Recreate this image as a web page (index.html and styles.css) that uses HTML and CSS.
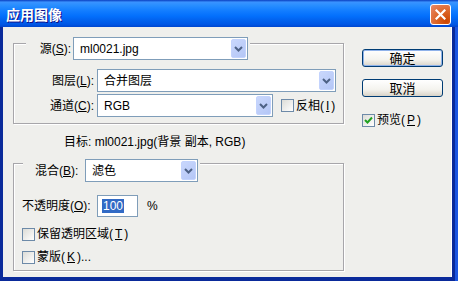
FILE: index.html
```html
<!DOCTYPE html>
<html>
<head>
<meta charset="utf-8">
<link rel="stylesheet" href="styles.css">
</head>
<body>
<div class="window">
  <div class="titlebar">
    <span class="title">应用图像</span>
    <span class="close"><svg width="11" height="11" viewBox="0 0 11 11"><path d="M1.5 1.5 L9.5 9.5 M9.5 1.5 L1.5 9.5" stroke="#fff" stroke-width="2.2" stroke-linecap="square"/></svg></span>
  </div>
  <div class="frame">
    <div class="content">
      <div class="main">
        <div class="group g1">
          <div class="legend l1">
            <span class="lbl lbl-src">源(<u>S</u>):</span>
            <div class="select s-src"><span>ml0021.jpg</span><i class="arrow"><svg width="9" height="6" viewBox="0 0 9 6"><path d="M1 1 L4.5 4.5 L8 1" fill="none" stroke="#4d6185" stroke-width="2"/></svg></i></div>
          </div>
          <div class="row r-layer">
            <span class="lbl lbl-r">图层(<u>L</u>):</span>
            <div class="select s-layer"><span>合并图层</span><i class="arrow"><svg width="9" height="6" viewBox="0 0 9 6"><path d="M1 1 L4.5 4.5 L8 1" fill="none" stroke="#4d6185" stroke-width="2"/></svg></i></div>
          </div>
          <div class="row r-chan">
            <span class="lbl lbl-r">通道(<u>C</u>):</span>
            <div class="select s-chan"><span>RGB</span><i class="arrow"><svg width="9" height="6" viewBox="0 0 9 6"><path d="M1 1 L4.5 4.5 L8 1" fill="none" stroke="#4d6185" stroke-width="2"/></svg></i></div>
            <span class="check c-inv"><span class="box"></span>反相(<u>I</u>)</span>
          </div>
        </div>
        <div class="target">目标: ml0021.jpg(背景 副本, RGB)</div>
        <div class="group g2">
          <div class="legend l2">
            <span class="lbl lbl-blend">混合(<u>B</u>):</span>
            <div class="select s-blend"><span>滤色</span><i class="arrow"><svg width="9" height="6" viewBox="0 0 9 6"><path d="M1 1 L4.5 4.5 L8 1" fill="none" stroke="#4d6185" stroke-width="2"/></svg></i></div>
          </div>
          <div class="row r-op">
            <span class="lbl lbl-op">不透明度(<u>O</u>):</span>
            <div class="input"><span class="sel">100</span></div>
            <span class="pct">%</span>
          </div>
          <span class="check c-keep"><span class="box"></span>保留透明区域(<u>T</u>)</span>
          <span class="check c-mask"><span class="box"></span>蒙版(<u>K</u>)...</span>
        </div>
      </div>
      <div class="side">
        <div class="btn btn-default">确定</div>
        <div class="btn btn-cancel">取消</div>
        <span class="check c-prev"><span class="box"><svg width="11" height="11" viewBox="0 0 11 11"><path d="M2 5 L4.5 7.5 L9 2.5" fill="none" stroke="#21a121" stroke-width="2"/></svg></span>预览(<u>P</u>)</span>
      </div>
    </div>
  </div>
</div>
</body>
</html>
```
FILE: styles.css
```css
* { box-sizing: border-box; }
html, body { margin: 0; padding: 0; }
body {
  width: 458px; height: 281px; overflow: hidden;
  background: #1c56e0;
  font-family: "Liberation Sans", "Noto Sans CJK SC", sans-serif;
  font-size: 12px; line-height: 14px; color: #000;
}
u { text-decoration: underline; text-underline-offset: 1px; }
.window { width: 458px; height: 281px; display: flex; flex-direction: column; }
.titlebar {
  height: 27px; flex: none;
  display: flex; align-items: center; justify-content: space-between;
  padding: 0 7px 0 6px;
  background: linear-gradient(#0a3fc0 0%, #3a93ff 8%, #288eff 20%, #127dff 40%, #036ffc 60%, #0262ee 75%, #0057e5 90%, #0046cf 100%);
}
.title {
  color: #fff; font-weight: bold; font-size: 14px;
  font-family: "Noto Sans CJK SC", sans-serif;
  text-shadow: 1px 1px #0f1089;
}
.close {
  width: 21px; height: 21px; margin-top: 1px;
  border: 1px solid #fff; border-radius: 3px;
  background: radial-gradient(circle at 80% 85%, #cc4600 0%, #dc6527 45%, #e98a6b 100%);
  display: flex; align-items: center; justify-content: center;
}
.frame {
  flex: 1; width: 455px;
  border: solid #0a2a9a; border-width: 0 3px 4px 3px;
  background: #efefec;
  box-shadow: inset -1px 0 #fff;
}
.content { display: flex; gap: 18px; padding: 16px 0 0 10px; }
.main { width: 331px; display: flex; flex-direction: column; }
.group {
  width: 331px;
  border: 1px solid #a7a6aa;
  box-shadow: inset 1px 1px #fff, 1px 1px #fff;
  display: flex; flex-direction: column; align-items: flex-start;
}
.g1 { height: 81px; }
.g2 { height: 108px; margin-top: 14px; }
.legend { display: flex; align-items: center; background: #efefec; }
.l1 { margin: -7px 0 0 12px; padding: 0 2px 0 6px; gap: 2px; }
.l2 { margin: -5px 0 0 9px; padding: 0 2px 0 12px; gap: 2px; }
.lbl { white-space: nowrap; }
.lbl-src { width: 39px; text-align: right; }
.lbl-blend { width: 48px; }
.lbl-r { width: 80px; text-align: right; }
.lbl-op { width: 73px; }
.row { display: flex; align-items: center; }
.r-layer { margin-top: 9px; gap: 3px; }
.r-chan { margin-top: 2px; gap: 3px; }
.r-op { margin: 13px 0 0 8px; gap: 2px; }
.select {
  height: 23px; border: 1px solid #7f9db9; background: #fff;
  display: flex; align-items: center; justify-content: space-between;
  padding: 0 1px 0 6px; white-space: nowrap;
}
.s-src { width: 175px; }
.s-layer { width: 239px; }
.s-chan { width: 176px; }
.s-blend { width: 113px; }
.arrow {
  width: 15px; height: 19px; border-radius: 2px;
  border: 1px solid #c3d3fd;
  background: linear-gradient(135deg, #c9d7fc, #b4c6f6);
  display: flex; align-items: center; justify-content: center;
}
.check { display: flex; align-items: center; gap: 2px; white-space: nowrap; height: 14px; }
.box {
  width: 13px; height: 13px; flex: none;
  border: 1px solid #6d8aa8;
  background: linear-gradient(135deg, #dcdcd7, #fff);
  display: flex; align-items: center; justify-content: center;
}
.c-inv { margin-left: 5px; }
.target { margin: 11px 0 0 51px; white-space: nowrap; }
.input {
  width: 41px; height: 22px; border: 1px solid #7f9db9; background: #fff;
  display: flex; align-items: center; padding-left: 4px;
}
.sel { background: #316ac5; color: #fff; padding: 0 1px; }
.pct { margin-left: 7px; }
.c-keep { margin: 10px 0 0 8px; }
.c-mask { margin: 9px 0 0 8px; }
.side { width: 81px; padding-top: 6px; display: flex; flex-direction: column; }
.btn {
  height: 18px; border: 1px solid #003c74; border-radius: 3px;
  background: linear-gradient(#ffffff 0%, #f4f3ee 60%, #d8d3c8 100%);
  display: flex; align-items: center; justify-content: center;
  font-family: "Noto Sans CJK SC", sans-serif; font-size: 13px;
}
.btn-default { box-shadow: inset 0 0 0 1px #8fb2ea; }
.btn-cancel { margin-top: 12px; }
.c-prev { margin-top: 16px; }
```
